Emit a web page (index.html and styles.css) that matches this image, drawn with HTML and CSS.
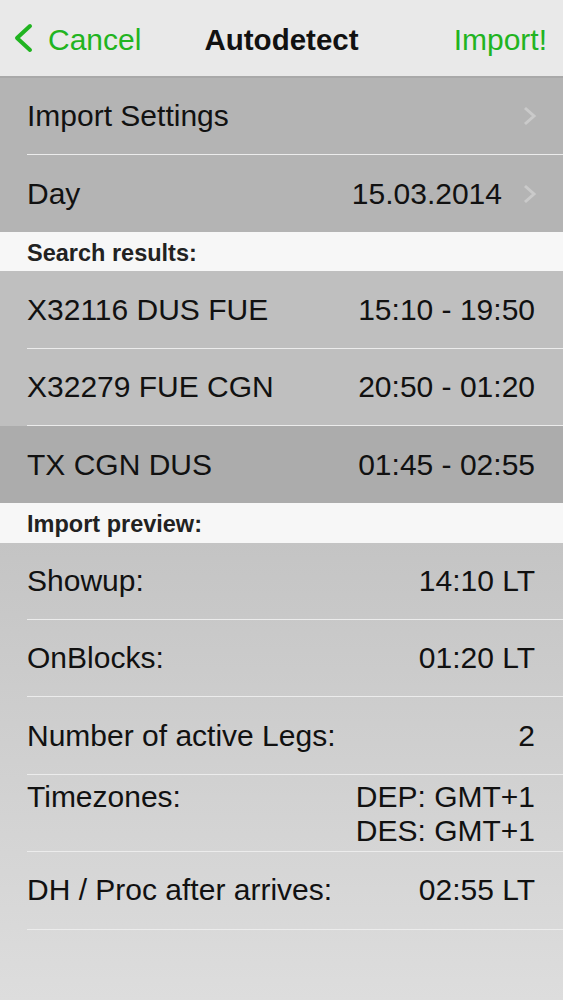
FILE: index.html
```html
<!DOCTYPE html>
<html lang="en">
<head>
    <meta charset="UTF-8">
    <meta name="viewport" content="width=device-width, initial-scale=1.0">
    <title>Autodetect</title>
    <link rel="stylesheet" href="styles.css">
</head>
<body>
    <div id="screen">
        <div id="nav-bar">
            <a class="nav-btn back-btn">
                <svg class="back-icon" width="22" height="30" viewBox="0 0 22 30">
                    <path d="M18 3 L5 15 L18 27" fill="none" stroke="#21b421" stroke-width="4" stroke-linecap="round" stroke-linejoin="round"/>
                </svg>
                Cancel
            </a>
            <div class="nav-title">Autodetect</div>
            <a class="nav-btn import-btn">Import!</a>
        </div>

        <div class="group settings-group">
            <div class="row">
                <div class="row-inner">
                    <span class="label">Import Settings</span>
                    <span class="value"></span>
                    <span class="chevron"><svg width="15" height="22" viewBox="0 0 15 22"><path d="M3 3 L12 11 L3 19" fill="none" stroke="#cacaca" stroke-width="3"/></svg></span>
                </div>
            </div>
            <div class="row">
                <div class="row-inner last">
                    <span class="label">Day</span>
                    <span class="value">15.03.2014</span>
                    <span class="chevron"><svg width="15" height="22" viewBox="0 0 15 22"><path d="M3 3 L12 11 L3 19" fill="none" stroke="#cacaca" stroke-width="3"/></svg></span>
                </div>
            </div>
        </div>

        <div class="section-header">Search results:</div>

        <div class="group results-group">
            <div class="row">
                <div class="row-inner">
                    <span class="label">X32116 DUS FUE</span>
                    <span class="value">15:10 - 19:50</span>
                </div>
            </div>
            <div class="row">
                <div class="row-inner">
                    <span class="label">X32279 FUE CGN</span>
                    <span class="value">20:50 - 01:20</span>
                </div>
            </div>
            <div class="row selected">
                <div class="row-inner last">
                    <span class="label">TX CGN DUS</span>
                    <span class="value">01:45 - 02:55</span>
                </div>
            </div>
        </div>

        <div class="section-header">Import preview:</div>

        <div class="group preview-group">
            <div class="row">
                <div class="row-inner">
                    <span class="label">Showup:</span>
                    <span class="value">14:10 LT</span>
                </div>
            </div>
            <div class="row">
                <div class="row-inner">
                    <span class="label">OnBlocks:</span>
                    <span class="value">01:20 LT</span>
                </div>
            </div>
            <div class="row">
                <div class="row-inner">
                    <span class="label">Number of active Legs:</span>
                    <span class="value">2</span>
                </div>
            </div>
            <div class="row">
                <div class="row-inner top">
                    <span class="label">Timezones:</span>
                    <span class="value">DEP: GMT+1<br>DES: GMT+1</span>
                </div>
            </div>
            <div class="row">
                <div class="row-inner">
                    <span class="label">DH / Proc after arrives:</span>
                    <span class="value">02:55 LT</span>
                </div>
            </div>
        </div>
    </div>
</body>
</html>
```

FILE: styles.css
```css
body {
    margin: 0;
    padding: 0;
    font-family: "Liberation Sans", Arimo, Arial, Helvetica, sans-serif;
    color: #111;
    background-color: #dcdcdc;
}
#screen {
    width: 563px;
    height: 1000px;
    overflow: hidden;
    display: flex;
    flex-direction: column;
    background: linear-gradient(#c4c4c4 540px, #dddddd 1000px);
}
#nav-bar {
    height: 76px;
    flex-shrink: 0;
    display: flex;
    align-items: center;
    justify-content: space-between;
    padding: 0 16px 0 12px;
    background-color: #e9e9e9;
    border-bottom: 2px solid #a9a9a9;
    position: relative;
}
.nav-btn {
    color: #21b421;
    font-size: 30px;
    display: flex;
    align-items: center;
    gap: 14px;
    padding-top: 3px;
}
.back-icon {
    margin-top: -3px;
}
.nav-title {
    position: absolute;
    left: 0;
    right: 0;
    text-align: center;
    font-size: 29.5px;
    font-weight: bold;
    color: #111;
    pointer-events: none;
    padding-top: 3px;
}
.group {
    flex-shrink: 0;
}
.settings-group {
    background-color: #b4b4b4;
}
.results-group {
    background-color: #bfbfbf;
}
.row.selected {
    background-color: #acacac;
}
.row {
    padding-left: 27px;
}
.row-inner {
    height: 76.4px;
    display: flex;
    align-items: center;
    padding-right: 28px;
    border-bottom: 1px solid #ececec;
    font-size: 30px;
}
.settings-group .row-inner {
    height: 76px;
}
.row-inner.last,
.settings-group .row-inner.last {
    border-bottom: none;
    height: 77px;
}
.row-inner.top {
    align-items: flex-start;
    padding-top: 5px;
    height: 71.4px;
    line-height: 34px;
}
.label {
    flex: 1;
    white-space: nowrap;
}
.value {
    text-align: right;
    white-space: nowrap;
}
.chevron {
    width: 15px;
    margin-left: 20px;
    margin-right: -2px;
    display: flex;
    align-items: center;
}
.section-header {
    height: 39.4px;
    box-sizing: border-box;
    padding-top: 4px;
    flex-shrink: 0;
    display: flex;
    align-items: center;
    padding-left: 27px;
    background-color: #f7f7f7;
    font-size: 23.5px;
    font-weight: bold;
    color: #222;
}
```
